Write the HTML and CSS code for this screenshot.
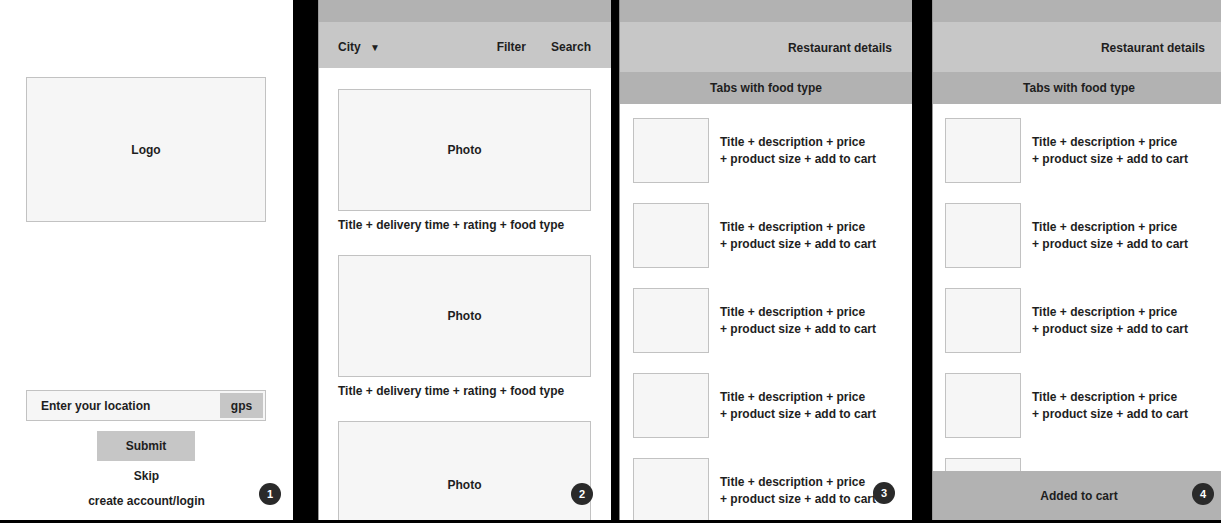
FILE: index.html
```html
<!DOCTYPE html>
<html lang="en">
<head>
    <meta charset="UTF-8">
    <meta name="viewport" content="width=device-width, initial-scale=1.0">
    <title>Food delivery wireframe</title>
    <link rel="stylesheet" href="styles.css">
</head>
<body>
    <div id="board">
        <!-- 1: start screen -->
        <div class="screen start">
            <div class="box logo">Logo</div>
            <div class="location">
                <span>Enter your location</span>
                <span class="gps">gps</span>
            </div>
            <div class="submit">Submit</div>
            <div class="link">Skip</div>
            <div class="link login">create account/login</div>
            <span class="badge">1</span>
        </div>

        <!-- 2: restaurant list -->
        <div class="screen list gap-wide">
            <div class="status"></div>
            <div class="header city-bar">
                <span class="city">City <i class="caret">&#9660;</i></span>
                <span class="spacer"></span>
                <span>Filter</span>
                <span class="search">Search</span>
            </div>
            <div class="cards">
                <div class="card">
                    <div class="box photo">Photo</div>
                    <p>Title + delivery time + rating + food type</p>
                </div>
                <div class="card">
                    <div class="box photo">Photo</div>
                    <p>Title + delivery time + rating + food type</p>
                </div>
                <div class="card">
                    <div class="box photo">Photo</div>
                </div>
            </div>
            <span class="badge">2</span>
        </div>

        <!-- 3: restaurant details -->
        <div class="screen menu gap-small">
            <div class="status"></div>
            <div class="header details">Restaurant details</div>
            <div class="tabs">Tabs with food type</div>
            <div class="items">
                <div class="item"><div class="box thumb"></div><p>Title + description + price<br>+ product size + add to cart</p></div>
                <div class="item"><div class="box thumb"></div><p>Title + description + price<br>+ product size + add to cart</p></div>
                <div class="item"><div class="box thumb"></div><p>Title + description + price<br>+ product size + add to cart</p></div>
                <div class="item"><div class="box thumb"></div><p>Title + description + price<br>+ product size + add to cart</p></div>
                <div class="item"><div class="box thumb"></div><p>Title + description + price<br>+ product size + add to cart</p></div>
            </div>
            <span class="badge">3</span>
        </div>

        <!-- 4: added to cart -->
        <div class="screen menu gap-mid">
            <div class="status"></div>
            <div class="header details">Restaurant details</div>
            <div class="tabs">Tabs with food type</div>
            <div class="items">
                <div class="item"><div class="box thumb"></div><p>Title + description + price<br>+ product size + add to cart</p></div>
                <div class="item"><div class="box thumb"></div><p>Title + description + price<br>+ product size + add to cart</p></div>
                <div class="item"><div class="box thumb"></div><p>Title + description + price<br>+ product size + add to cart</p></div>
                <div class="item"><div class="box thumb"></div><p>Title + description + price<br>+ product size + add to cart</p></div>
                <div class="item"><div class="box thumb"></div></div>
            </div>
            <div class="cart-bar">Added to cart</div>
            <span class="badge">4</span>
        </div>
    </div>
</body>
</html>
```

FILE: styles.css
```css
html, body {
    margin: 0;
    padding: 0;
    background: #000;
    overflow: hidden;
}
body {
    font-family: "Liberation Sans", Arial, sans-serif;
    font-size: 12px;
    font-weight: bold;
    color: #1e1e1e;
}
#board {
    display: flex;
    align-items: flex-start;
    height: 523px;
}
.screen {
    position: relative;
    flex: none;
    width: 293px;
    height: 520px;
    background: #fff;
    overflow: hidden;
    box-sizing: border-box;
    display: flex;
    flex-direction: column;
}
.gap-wide { margin-left: 25px; border-left: 1px solid #9a9a9a; }
.gap-small { margin-left: 8px; border-left: 1px solid #8a8a8a; }
.gap-mid { margin-left: 20px; border-left: 1px solid #9a9a9a; }

.box {
    background: #f6f6f6;
    border: 1px solid #c2c2c2;
    box-sizing: border-box;
    display: flex;
    align-items: center;
    justify-content: center;
}

/* screen 1 */
.start {
    align-items: flex-start;
}
.logo {
    margin: 77px 0 0 26px;
    width: 240px;
    height: 145px;
}
.location {
    margin: 168px 0 0 26px;
    width: 240px;
    height: 31px;
    background: #f6f6f6;
    border: 1px solid #c2c2c2;
    box-sizing: border-box;
    display: flex;
    align-items: center;
    justify-content: space-between;
    padding: 0 2px 0 14px;
}
.gps {
    background: #c6c6c6;
    width: 43px;
    height: 25px;
    display: flex;
    align-items: center;
    justify-content: center;
}
.submit {
    margin: 10px 0 0 97px;
    width: 98px;
    height: 30px;
    background: #c6c6c6;
    display: flex;
    align-items: center;
    justify-content: center;
}
.link {
    align-self: stretch;
    text-align: center;
    line-height: 14px;
    margin-top: 8px;
}
.login {
    margin-top: 11px;
}

/* top bars */
.status {
    flex: none;
    height: 22px;
    background: #b2b2b2;
}
.header {
    flex: none;
    background: #c7c7c7;
    display: flex;
    align-items: center;
    box-sizing: border-box;
}
.city-bar {
    height: 46px;
    padding: 3px 20px 0 19px;
}
.caret {
    font-style: normal;
    font-size: 10px;
    margin-left: 6px;
}
.spacer { flex: 1; }
.search { margin-left: 25px; }
.details {
    height: 50px;
    justify-content: flex-end;
    padding: 2px 20px 0 0;
}
.tabs {
    flex: none;
    height: 32px;
    background: #b2b2b2;
    display: flex;
    align-items: center;
    justify-content: center;
}

/* screen 2 */
.cards {
    padding: 21px 20px 0 19px;
}
.card {
    margin-bottom: 23px;
}
.photo {
    height: 122px;
}
.card + .card {
    margin-top: 1px;
}
.card:last-child .photo {
    height: 124px;
    padding-top: 4px;
}
.card p {
    margin: 7px 0 0;
    line-height: 14px;
}

/* screens 3 and 4 */
.items {
    flex: 1;
    overflow: hidden;
    padding: 14px 0 0 13px;
}
.item {
    display: flex;
    align-items: center;
    margin-bottom: 20px;
}
.thumb {
    flex: none;
    width: 76px;
    height: 65px;
}
.item p {
    margin: 0 0 0 11px;
    line-height: 17px;
}
.gap-mid .items {
    padding-left: 12px;
}
.cart-bar {
    flex: none;
    height: 49px;
    background: #b2b2b2;
    display: flex;
    align-items: center;
    justify-content: center;
}

.badge {
    position: absolute;
    bottom: 15px;
    right: 12px;
    width: 22px;
    height: 22px;
    border-radius: 50%;
    background: #2a2a2a;
    color: #fff;
    font-size: 11px;
    display: flex;
    align-items: center;
    justify-content: center;
}
.list .badge { right: 18px; }
.gap-small .badge { right: 17px; bottom: 16px; }
.gap-mid .badge { right: 11px; }
```
